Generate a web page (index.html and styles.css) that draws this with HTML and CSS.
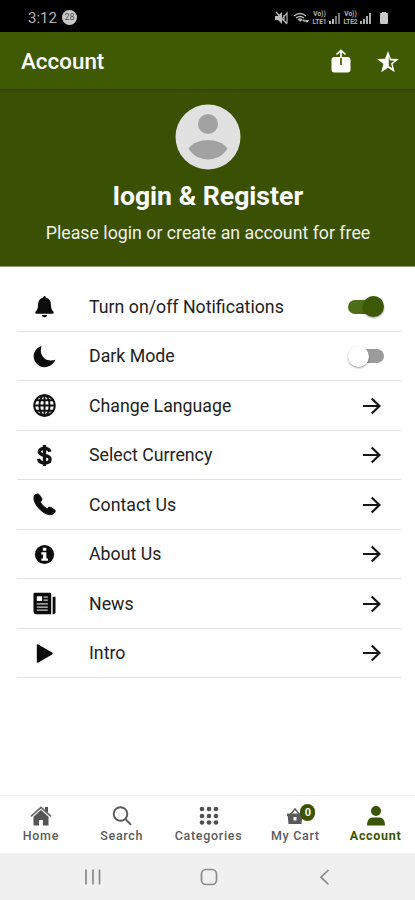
FILE: index.html
```html
<!DOCTYPE html>
<html lang="en">
<head>
<meta charset="utf-8">
<title>Account</title>
<link rel="stylesheet" href="styles.css">
</head>
<body>
<div class="status">
  <span class="time">3:12</span><span class="count">28</span>
  <div class="signals">
    <svg width="13" height="14" viewBox="0 0 13 14"><path d="M0 5h3l4-4v12L3 9H0z" fill="#bbb"/><path d="M1 1l11 12M8 7l4-5v10M9 4v6" stroke="#bbb" stroke-width="1.200" fill="none"/></svg>
    <svg class="wifi" width="17" height="14" viewBox="0 0 17 14"><path d="M1 5Q7 0 13 5M3 7Q7 4 11 7M5 9Q7 7 9 9" stroke="#bbb" stroke-width="1.500" fill="none"/><path d="M6 9l1 2 2-2zM9 10l2-2 2 3zM12 9h4l-2 3z" fill="#bbb"/></svg>
    <span class="lte"><i>Vo))</i><i>LTE1</i></span>
    <svg class="bars" width="11" height="12" viewBox="0 0 11 12"><path d="M0 9h2v3H0zM3 7h2v5H3z" fill="#bbb"/><path d="M6 4h2v8H6zM9 1h2v11H9z" fill="#777"/></svg>
    <span class="lte lte2"><i>Vo))</i><i>LTE2</i></span>
    <svg class="bars" width="11" height="12" viewBox="0 0 11 12"><path d="M0 9h2v3H0zM3 7h2v5H3zM6 4h2v8H6zM9 1h2v11H9z" fill="#aaa"/></svg>
    <svg class="battery" width="8" height="12" viewBox="0 0 8 12"><path d="M2 0h4v1h1q1 0 1 1v9q0 1-1 1H1q-1 0-1-1V2q0-1 1-1h1z" fill="#c8c8c8"/></svg>
  </div>
</div>
<header class="bar">
  <h1>Account</h1>
  <svg class="share" width="20" height="24" viewBox="0 0 20 24"><rect x=".5" y="8" width="19" height="15.500" rx="3" fill="#fff"/><path d="M10 8v8" stroke="#3f5a02" stroke-width="1.700"/><path d="M10 9V2M5.500 5.500L10 1.300l4.500 4.200" stroke="#fff" stroke-width="1.700" fill="none"/></svg>
  <svg class="star" width="24" height="24" viewBox="0 0 24 24"><path fill="#fff" fill-rule="evenodd" d="M12 1l2.900 7.700 8.100.4-6.400 5 2.200 8.100L12 17.700l-6.800 4.500 2.200-8.100-6.400-5 8.100-.4zM12.800 6.300v9.700l3.500 2.200-1.300-4.700 3.400-2.700-4.400-.2z"/></svg>
</header>
<section class="profile">
  <svg width="66" height="66" viewBox="0 0 66 66"><circle cx="33" cy="33" r="32.500" fill="#e1e1e1"/><circle cx="33" cy="20" r="10" fill="#a2a2a2"/><path d="M13.500 44.500C22 33 44 33 52.500 44.500 44 59 22 59 13.500 44.500z" fill="#a2a2a2"/></svg>
  <h2>login &amp; Register</h2>
  <p>Please login or create an account for free</p>
</section>
<main class="list">
  <div class="row"><svg class="icon" viewBox="0 0 24 24"><path d="M12 1q1.300 0 1.400 1.700C17 3.500 18.600 6.300 18.700 10c.1 4.200.9 5.600 2.500 7.200.9 1 .4 2.300-.9 2.300H3.700c-1.300 0-1.800-1.300-.9-2.300C4.400 15.600 5.200 14.200 5.300 10c.1-3.700 1.700-6.500 5.300-7.300Q10.700 1 12 1zM9 20.800h6q-.5 2.500-3 2.500t-3-2.500z"/></svg><span class="label">Turn on/off Notifications</span><span class="switch on"></span></div>
  <div class="row"><svg class="icon" viewBox="0 0 24 24"><path d="M9 1C6 8.500 11 19 23.500 15.500 20 23 11 25.500 5 20.500-2 14.500-.5 4.500 9 1z"/></svg><span class="label">Dark Mode</span><span class="switch"></span></div>
  <div class="row"><svg class="icon" viewBox="0 0 24 24"><g fill="none" stroke="#111" stroke-width="2"><circle cx="12" cy="12" r="10.700"/><ellipse cx="12" cy="12" rx="5.300" ry="10.700"/><path d="M12 1v22M1 12h22M3 6.500h18M3 17.500h18"/></g></svg><span class="label">Change Language</span><svg class="arrow" viewBox="0 0 18 18"><path d="M0 9h16.500M8.700 1.500L16.500 9l-7.800 7.500"/></svg></div>
  <div class="row"><svg class="icon" viewBox="0 0 24 24"><path fill="none" stroke="#111" stroke-width="3.500" d="M17.800 8C17 5.300 15 4.500 12 4.500c-3.500 0-5.400 1.500-5.400 3.700 0 5.300 11.200 2.200 11.200 7.600 0 2.500-2.200 3.900-5.800 3.900-3.500 0-5.700-1.500-6.300-4.200M12 1v22"/></svg><span class="label">Select Currency</span><svg class="arrow" viewBox="0 0 18 18"><path d="M0 9h16.500M8.700 1.500L16.500 9l-7.800 7.500"/></svg></div>
  <div class="row"><svg class="icon" viewBox="0 0 24 24"><path stroke="#0c0c0c" stroke-width="1" stroke-linejoin="round" d="M2 2.200C4 .8 5.600.6 6.700 2L9 5.500c.8 1.500-.1 2.600-1.400 3.800 1.500 3 4 5.400 7.100 7.100 1.300-1.600 2.500-2.100 3.900-1.300l3.900 2.400c1.200 1.100 1 2.400-.8 3.900-3.200 2.700-9.300.8-14-3.800C2.700 13-1 5.500 2 2.200z"/></svg><span class="label">Contact Us</span><svg class="arrow" viewBox="0 0 18 18"><path d="M0 9h16.500M8.700 1.500L16.500 9l-7.800 7.500"/></svg></div>
  <div class="row"><svg class="icon" viewBox="0 0 24 24"><circle cx="12" cy="12" r="10"/><path fill="#fff" d="M10.300 5h3.600v3.200h-3.600zM8.700 9.700h5.200v6.500h1.700v2.300H8.700v-2.300h1.700V12H8.700z"/></svg><span class="label">About Us</span><svg class="arrow" viewBox="0 0 18 18"><path d="M0 9h16.500M8.700 1.500L16.500 9l-7.800 7.500"/></svg></div>
  <div class="row"><svg class="icon" viewBox="0 0 24 24"><path fill-rule="evenodd" d="M2 .7h15.500q1.500 0 1.500 1.500v21H3q-2.500 0-2.500-2.500V2.200Q.5.700 2 .7zM4 4.500v5h5.500v-5zM20.500 5h3v15.500q0 2.700-3 2.700z"/><path stroke="#ccc" stroke-width="1.300" d="M11 5.300h4.500M11 8.500h4.500M4 12.500h11.500M4 15.800h11.500M4 19h11.500"/></svg><span class="label">News</span><svg class="arrow" viewBox="0 0 18 18"><path d="M0 9h16.500M8.700 1.500L16.500 9l-7.800 7.500"/></svg></div>
  <div class="row"><svg class="icon" viewBox="0 0 24 24"><path d="M4 3.500q0-1.500 1.500-1L20 11q1.400 1 0 2L5.500 21.500q-1.500.5-1.500-1z"/></svg><span class="label">Intro</span><svg class="arrow" viewBox="0 0 18 18"><path d="M0 9h16.500M8.700 1.500L16.500 9l-7.800 7.500"/></svg></div>
</main>
<nav class="tabs">
  <div class="tab"><svg width="22" height="22" viewBox="0 0 22 22"><path fill="#555" d="M3.500 11.800L11 5l7.500 6.800V20.500H13V15H9v5.500H3.500zM15 2h3v6l-3-2.500z"/><path d="M1 11.300L11 2.300l10 9" stroke="#666" stroke-width="1.600" fill="none"/></svg><span>Home</span></div>
  <div class="tab"><svg width="22" height="22" viewBox="0 0 22 22"><g fill="none" stroke="#5a5a5a" stroke-width="1.900"><circle cx="9.500" cy="9" r="6.800"/><path d="M14.300 13.800l5.700 6"/></g></svg><span>Search</span></div>
  <div class="tab wide"><svg width="22" height="22" viewBox="0 0 22 22"><g fill="#505050"><circle cx="4" cy="4" r="2.300"/><circle cx="11" cy="4" r="2.300"/><circle cx="18" cy="4" r="2.300"/><circle cx="4" cy="11" r="2.300"/><circle cx="11" cy="11" r="2.300"/><circle cx="18" cy="11" r="2.300"/><circle cx="4" cy="17.500" r="2.300"/><circle cx="11" cy="17.500" r="2.300"/><circle cx="18" cy="17.500" r="2.300"/></g></svg><span>Categories</span></div>
  <div class="tab"><div class="cart"><svg width="22" height="22" viewBox="0 0 22 22"><path d="M6 10l5-6 5 6" stroke="#5a5a5a" stroke-width="1.500" fill="none"/><path fill="#5a5a5a" fill-rule="evenodd" d="M3 8.500h16V11h-.7L17.500 19h-13L3.700 11H3zM9.500 12v3.500h3V12z"/></svg><b>0</b></div><span>My Cart</span></div>
  <div class="tab active"><svg width="22" height="22" viewBox="0 0 22 22"><g fill="#3a5502"><circle cx="11" cy="6" r="5"/><path d="M2 20.500q0-8 6-8h6q6 0 6 8z"/></g></svg><span>Account</span></div>
</nav>
<footer class="system">
  <svg width="18" height="18" viewBox="0 0 18 18"><path d="M2 1.500v15M9 1.500v15M15.500 1.500v15"/></svg>
  <svg width="18" height="18" viewBox="0 0 18 18"><rect x="1.500" y="1.500" width="15" height="15" rx="4.500"/></svg>
  <svg width="18" height="18" viewBox="0 0 18 18"><path d="M12.500 2L5 9.200l7.500 7.300"/></svg>
</footer>
</body>
</html>
```
FILE: styles.css
```css
* { box-sizing: border-box; }
body { margin: 0; width: 415px; height: 900px; overflow: hidden; display: flex; flex-direction: column; background: #fff; font-family: Roboto, sans-serif; color: #222; }
h1, h2, p { margin: 0; }
svg { display: block; flex: none; }
.status { height: 32px; background: #000; display: flex; align-items: center; padding: 3px 27px 0 28px; color: #b5b5b5; flex: none; }
.time { font-size: 15px; line-height: 18px; width: 34px; }
.count { width: 15px; height: 15px; border-radius: 50%; background: #c8c8c8; color: #555; font-size: 9px; line-height: 15px; text-align: center; }
.signals { display: flex; align-items: center; margin-left: auto; }
.wifi { margin-left: 5px; }
.lte { width: 15px; margin: 0 2px 0 2px; font-size: 6.500px; font-weight: 700; white-space: nowrap; display: flex; flex-direction: column; align-items: center; }
.lte i { font-style: normal; line-height: 8px; }
.lte2 { margin-left: 3px; }
.battery { margin-left: 9px; }
.bar { height: 57px; flex: none; background: #3f5a02; color: #fff; display: flex; align-items: center; padding: 0 15px 0 21px; }
h1 { font-size: 22.400px; line-height: 28px; font-weight: 500; margin-right: auto; }
.share { margin-right: 25px; }
.star { margin-top: 2px; }
.profile { height: 178px; flex: none; background: linear-gradient(#314604, #3a5104 4px); border-bottom: 1px solid #8c9c70; display: flex; flex-direction: column; align-items: center; padding: 15px 0 0 1px; color: #fff; }
h2 { font-size: 26.600px; line-height: 32px; font-weight: 700; margin-top: 10px; white-space: nowrap; }
.profile p { font-size: 17.750px; line-height: 22px; margin-top: 10px; white-space: nowrap; color: #f0f2e9; }
.list { padding: 15px 14px 0 17px; flex: 1; }
.row { height: 49.500px; border-bottom: 1px solid #e2e2e2; display: flex; align-items: center; padding: 1px 17px 0 16px; }
.icon { width: 23px; height: 23px; fill: #0c0c0c; }
.label { font-size: 17.750px; line-height: 22px; margin: 0 auto 0 33px; white-space: nowrap; }
.arrow { width: 18px; height: 18px; margin-right: 3px; fill: none; stroke: #151515; stroke-width: 2.200; }
.switch { width: 36px; height: 22px; display: flex; align-items: center; position: relative; }
.switch::before { content: ""; position: absolute; left: 2px; right: 0; top: 4px; height: 14px; border-radius: 7px; background: #9b9b9b; }
.switch::after { content: ""; width: 21px; height: 21px; border-radius: 50%; background: #fff; box-shadow: 0 1px 2px #0006; position: relative; }
.on { justify-content: flex-end; }
.on::before { left: 0; right: 2px; background: #4e6d17; }
.on::after { background: #3d5905; }
.tabs { height: 58px; flex: none; border-top: 1px solid #eee; display: flex; font-size: 12.500px; font-weight: 500; color: #5b5b5b; }
.tab { width: 81px; display: flex; flex-direction: column; align-items: center; padding: 9px 0 0 1px; }
.tab span { line-height: 16px; margin-top: 1px; letter-spacing: .7px; white-space: nowrap; }
.wide { width: 93px; }
.active { width: 80px; color: #3a5502; }
.active span { font-weight: 700; }
.cart { position: relative; }
.cart b { position: absolute; left: 16px; top: -1px; width: 15px; height: 17px; border-radius: 8px; background: #3a5502; color: #fff; font-size: 11px; line-height: 17px; text-align: center; }
.system { height: 47px; flex: none; background: #f0f0f0; display: flex; justify-content: space-between; align-items: center; padding: 0 81px 0 84px; }
.system svg { fill: none; stroke: #8a8a8a; stroke-width: 1.700; }
```
